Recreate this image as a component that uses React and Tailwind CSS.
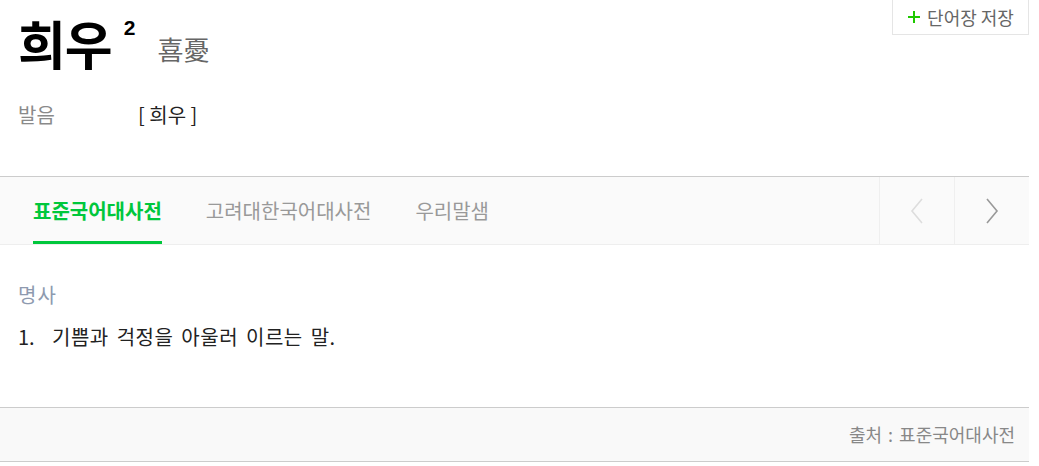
import React from "react";

const font = { fontFamily: '"Noto Sans CJK KR", "Noto Sans", sans-serif' };

export default function App() {
  return (
    <div className="w-[1029px] bg-white relative text-[#222]" style={font}>
      <button className="absolute top-0 right-0 w-[137px] h-[35px] border border-[#e5e5e5] border-t-0 bg-white flex items-center justify-center gap-[6px] text-[18px] text-[#666]">
        <svg width="14" height="14" viewBox="0 0 14 14">
          <path d="M7 1v12M1 7h12" stroke="#1ec800" strokeWidth="2" />
        </svg>
        <span className="leading-[24px]">단어장 저장</span>
      </button>

      <div className="px-[18px] pt-[10px]">
        <div className="flex items-start h-[66px]">
          <span className="text-[52px] leading-[66px] font-bold text-black tracking-[-1px]">희우</span>
          <span className="text-[21px] font-bold text-black ml-[12px] mt-[5px] leading-[26px]" style={{ fontFamily: '"Liberation Sans", sans-serif' }}>2</span>
          <span className="text-[26px] text-[#666] ml-[22px] mt-[22px] leading-[34px]">喜憂</span>
        </div>
        <div className="flex items-center mt-[24px] h-[30px] text-[20px]">
          <span className="w-[120px] text-[#8a8a8a]">발음</span>
          <span className="text-[#222]">[ 희우 ]</span>
        </div>
      </div>

      <div className="mt-[46px] h-[69px] border-t border-[#cccccc] border-b border-b-[#eeeeee] bg-[#fafafa] flex">
        <div className="flex-1 flex pl-[33px] gap-[44px] text-[20px]">
          <div className="relative flex items-center h-full text-[#00c73c] font-bold">
            표준국어대사전
            <div className="absolute left-0 right-0 bottom-0 h-[3px] bg-[#00c73c]" />
          </div>
          <div className="flex items-center h-full text-[#999]">고려대한국어대사전</div>
          <div className="flex items-center h-full text-[#999]">우리말샘</div>
        </div>
        <div className="w-[75px] h-full border-l border-[#efefef] flex items-center justify-center">
          <svg width="14" height="28" viewBox="0 0 14 28">
            <path d="M12 2L2 14l10 12" fill="none" stroke="#dddddd" strokeWidth="1.6" />
          </svg>
        </div>
        <div className="w-[75px] h-full border-l border-[#efefef] flex items-center justify-center">
          <svg width="14" height="28" viewBox="0 0 14 28">
            <path d="M2 2l10 12L2 26" fill="none" stroke="#999999" strokeWidth="1.6" />
          </svg>
        </div>
      </div>

      <div className="px-[18px] pt-[36px] pb-[56px]">
        <div className="text-[20px] text-[#8e9aaf] h-[28px] leading-[28px] tracking-[1px]">명사</div>
        <div className="flex mt-[14px] text-[20px] h-[28px] leading-[28px] text-[#222]">
          <span className="w-[34px]">1.</span>
          <span className="tracking-[0.5px] [word-spacing:3px]">기쁨과 걱정을 아울러 이르는 말.</span>
        </div>
      </div>

      <div className="h-[55px] border-t border-b border-[#cccccc] bg-[#f9f9f9] flex items-center justify-end pr-[14px] text-[18px] [word-spacing:2px] text-[#888]">
        출처 : 표준국어대사전
      </div>
    </div>
  );
}
